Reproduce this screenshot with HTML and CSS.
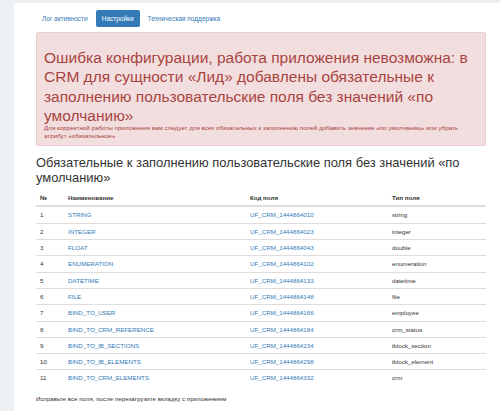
FILE: index.html
```html
<!DOCTYPE html>
<html lang="ru">
<head>
  <meta charset="UTF-8" />
  <title>Настройки</title>
  <link rel="stylesheet" href="styles.css">
</head>
<body>

  <div class="panel">
    <!-- TABS -->
    <ul class="nav-pills">
      <li><a href="#">Лог активности</a></li>
      <li class="active"><a href="#">Настройки</a></li>
      <li><a href="#">Техническая поддержка</a></li>
    </ul>

    <!-- ERROR -->
    <div class="alert">
      <h1>Ошибка конфигурации, работа приложения невозможна: в CRM для сущности «Лид» добавлены обязательные к заполнению пользовательские поля без значений «по умолчанию»</h1>
      <p>Для корректной работы приложения вам следует для всех обязательных к заполнению полей добавить значение «по умолчанию» или убрать атрибут «обязательное»</p>
    </div>

    <h3>Обязательные к заполнению пользовательские поля без значений «по умолчанию»</h3>

    <table class="fields">
      <thead>
        <tr>
          <th class="num">№</th>
          <th class="name">Наименование</th>
          <th class="code">Код поля</th>
          <th>Тип поля</th>
        </tr>
      </thead>
      <tbody>
        <tr><td>1</td><td><a href="#">STRING</a></td><td><a href="#">UF_CRM_1444864010</a></td><td>string</td></tr>
        <tr><td>2</td><td><a href="#">INTEGER</a></td><td><a href="#">UF_CRM_1444864023</a></td><td>integer</td></tr>
        <tr><td>3</td><td><a href="#">FLOAT</a></td><td><a href="#">UF_CRM_1444864043</a></td><td>double</td></tr>
        <tr><td>4</td><td><a href="#">ENUMERATION</a></td><td><a href="#">UF_CRM_1444864102</a></td><td>enumeration</td></tr>
        <tr><td>5</td><td><a href="#">DATETIME</a></td><td><a href="#">UF_CRM_1444864133</a></td><td>datetime</td></tr>
        <tr><td>6</td><td><a href="#">FILE</a></td><td><a href="#">UF_CRM_1444864148</a></td><td>file</td></tr>
        <tr><td>7</td><td><a href="#">BIND_TO_USER</a></td><td><a href="#">UF_CRM_1444864166</a></td><td>employee</td></tr>
        <tr><td>8</td><td><a href="#">BIND_TO_CRM_REFERENCE</a></td><td><a href="#">UF_CRM_1444864184</a></td><td>crm_status</td></tr>
        <tr><td>9</td><td><a href="#">BIND_TO_IB_SECTIONS</a></td><td><a href="#">UF_CRM_1444864234</a></td><td>iblock_section</td></tr>
        <tr><td>10</td><td><a href="#">BIND_TO_IB_ELEMENTS</a></td><td><a href="#">UF_CRM_1444864298</a></td><td>iblock_element</td></tr>
        <tr><td>11</td><td><a href="#">BIND_TO_CRM_ELEMENTS</a></td><td><a href="#">UF_CRM_1444864332</a></td><td>crm</td></tr>
      </tbody>
    </table>

    <p class="note">Исправьте все поля, после перезагрузите вкладку с приложением</p>
  </div>

</body>
</html>
```

FILE: styles.css
```css
* {
  box-sizing: border-box;
}

body {
  margin: 0;
  background: #edf1f4;
  font-family: "Liberation Sans", Arial, sans-serif;
  color: #333;
}

a {
  color: #337ab7;
  text-decoration: none;
}

.panel {
  background: #fff;
  margin: 3px 0 0 14px;
  padding: 7px 14px 20px 22px;
  min-height: 408px;
}

.nav-pills {
  display: flex;
  gap: 2px;
  list-style: none;
  margin: 0;
  padding: 0;
}

.nav-pills a {
  display: block;
  padding: 4px 6px;
  font-size: 6.5px;
  line-height: 9px;
  border-radius: 2px;
}

.nav-pills .active a {
  background: #337ab7;
  color: #fff;
}

.alert {
  margin-top: 5px;
  padding: 1px 7px 5px;
  background: #f2dede;
  border: 1px solid #ebccd1;
  border-radius: 2px;
  color: #a94442;
}

.alert h1 {
  margin: 14px 0 0;
  font-size: 15.5px;
  line-height: 19.3px;
  font-weight: normal;
}

.alert p {
  margin: -1px 0 0;
  font-size: 6.25px;
  line-height: 8px;
}

h3 {
  margin: 9px 0 5px;
  font-size: 12.9px;
  line-height: 15px;
  font-weight: normal;
  color: #333;
}

.fields {
  width: 450px;
  border-collapse: collapse;
  font-size: 6.2px;
}

.fields th,
.fields td {
  padding: 4px 4px;
  line-height: 7.3px;
  text-align: left;
  vertical-align: top;
}

.fields th {
  border-bottom: 2px solid #ddd;
}

.fields td {
  border-top: 1px solid #ddd;
}

.fields tbody tr:first-child td {
  border-top: 0;
}

.fields .num {
  width: 28px;
}

.fields .name {
  width: 182px;
}

.fields .code {
  width: 142px;
}

.note {
  margin: 9.5px 0 0;
  font-size: 6.2px;
  line-height: 8px;
}
```
